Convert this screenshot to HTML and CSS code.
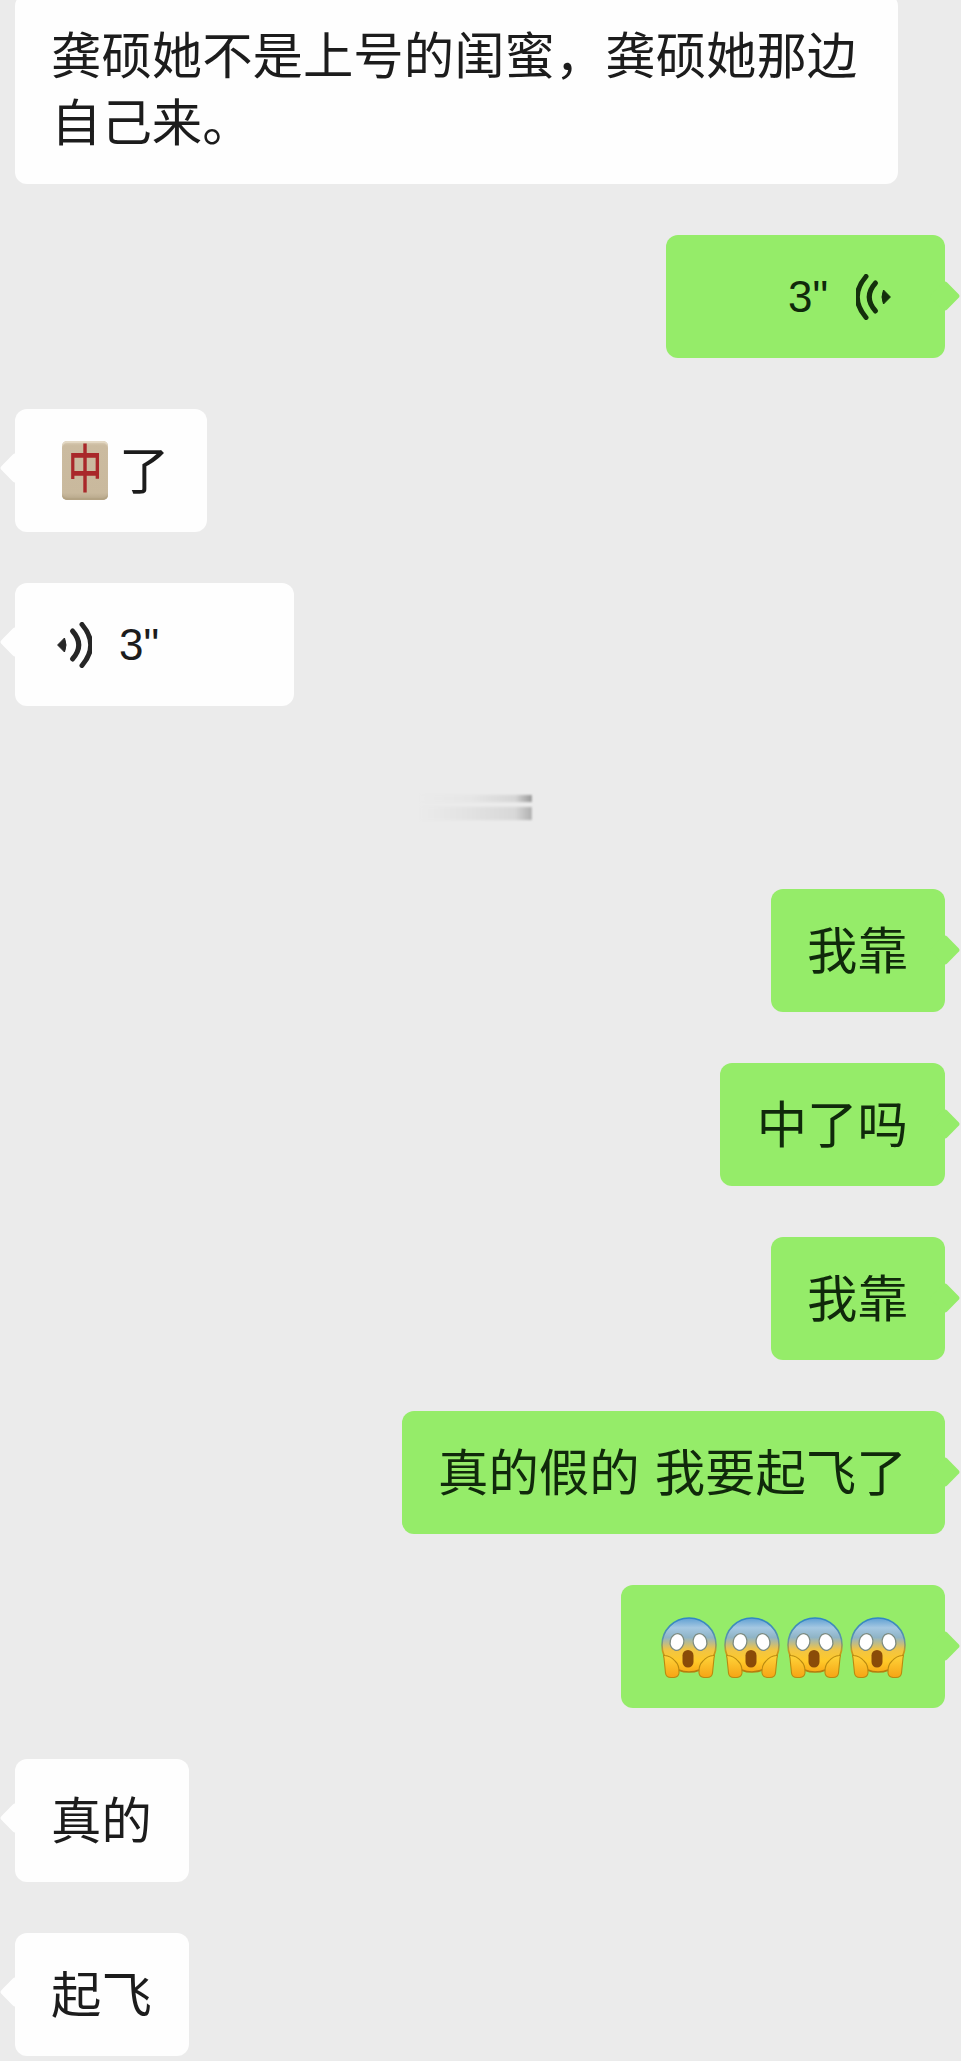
FILE: index.html
```html
<!DOCTYPE html>
<html lang="zh-CN">
<head>
<meta charset="utf-8">
<title>Chat</title>
<link rel="stylesheet" href="styles.css">
</head>
<body>
<svg class="defs" width="0" height="0" aria-hidden="true">
  <defs>
    <symbol id="wave" viewBox="0 0 35 46">
      <path d="M0.6 23 L7.5 16 Q10.5 23 7.5 30 Z" fill="currentColor" stroke="currentColor" stroke-width="1" stroke-linejoin="round"/>
      <path d="M15.5 9 Q28 23 15.5 37" fill="none" stroke="currentColor" stroke-width="5" stroke-linecap="round"/>
      <path d="M25 2.5 Q42.5 23 25 43.5" fill="none" stroke="currentColor" stroke-width="5" stroke-linecap="round"/>
    </symbol>
    <linearGradient id="headFill" x1="0" y1="0" x2="0" y2="1">
      <stop offset="0" stop-color="#5f9fd2"/>
      <stop offset="0.18" stop-color="#a5c8e2"/>
      <stop offset="0.36" stop-color="#8fb4c6"/>
      <stop offset="0.58" stop-color="#f0c446"/>
      <stop offset="0.8" stop-color="#ffc928"/>
      <stop offset="1" stop-color="#f9a917"/>
    </linearGradient>
    <linearGradient id="headEdge" x1="0" y1="0" x2="0" y2="1">
      <stop offset="0" stop-color="#2f86c6"/>
      <stop offset="0.4" stop-color="#5d93a8"/>
      <stop offset="0.62" stop-color="#c99a1c"/>
      <stop offset="1" stop-color="#b67c0c"/>
    </linearGradient>
    <linearGradient id="handFill" x1="0" y1="0" x2="0" y2="1">
      <stop offset="0" stop-color="#ffd53a"/>
      <stop offset="1" stop-color="#f6a414"/>
    </linearGradient>
    <symbol id="scream" viewBox="0 0 56 62">
      <circle cx="28" cy="28" r="27" fill="url(#headFill)" stroke="url(#headEdge)" stroke-width="1.6"/>
      <ellipse cx="16" cy="25" rx="6.8" ry="8.4" transform="rotate(14 16 25)" fill="#fff" stroke="#7c8a80" stroke-width="1.3"/>
      <ellipse cx="39" cy="25" rx="6.8" ry="8.4" transform="rotate(-14 39 25)" fill="#fff" stroke="#7c8a80" stroke-width="1.3"/>
      <rect x="21.5" y="33" width="11" height="17.5" rx="5.5" fill="#8a4b08"/>
      <path d="M3.5 38.5 Q2 37 3 41 L4.5 56 Q5 60.5 10 60.5 L13 60.5 Q17.5 60 18 56 Q18.5 48 14 44 Q10 39 3.5 38.5 Z" fill="url(#handFill)" stroke="#b98a10" stroke-width="1.1"/>
      <path d="M52.5 38.5 Q54 37 53 41 L51.5 56 Q51 60.5 46 60.5 L43 60.5 Q38.5 60 38 56 Q37.5 48 42 44 Q46 39 52.5 38.5 Z" fill="url(#handFill)" stroke="#b98a10" stroke-width="1.1"/>
    </symbol>
  </defs>
</svg>

<main class="chat">
  <div class="row row-in">
    <div class="bubble in no-tail">龚硕她不是上号的闺蜜&#65292;龚硕她那边<br>自己来。</div>
  </div>

  <div class="row row-out">
    <div class="bubble out voice-out">
      <span class="secs">3"</span>
      <svg class="wave flip"><use href="#wave"/></svg>
    </div>
  </div>

  <div class="row row-in">
    <div class="bubble in tile-msg">
      <span class="tile"><span class="tile-glyph">中</span></span>
      <span>了</span>
    </div>
  </div>

  <div class="row row-in">
    <div class="bubble in voice-in">
      <svg class="wave"><use href="#wave"/></svg>
      <span class="secs">3"</span>
    </div>
  </div>

  <div class="blurred" aria-hidden="true">
    <div class="smear smear-thin"></div>
    <div class="smear smear-thick"></div>
  </div>

  <div class="row row-out"><div class="bubble out">我靠</div></div>
  <div class="row row-out"><div class="bubble out wide">中了吗</div></div>
  <div class="row row-out"><div class="bubble out">我靠</div></div>
  <div class="row row-out"><div class="bubble out long">真的假的 我要起飞了</div></div>

  <div class="row row-out">
    <div class="bubble out emoji-msg">
      <svg class="scream"><use href="#scream"/></svg>
      <svg class="scream"><use href="#scream"/></svg>
      <svg class="scream"><use href="#scream"/></svg>
      <svg class="scream"><use href="#scream"/></svg>
    </div>
  </div>

  <div class="row row-in"><div class="bubble in">真的</div></div>
  <div class="row row-in"><div class="bubble in">起飞</div></div>
</main>
</body>
</html>
```

FILE: styles.css
```css
html, body {
  margin: 0;
  padding: 0;
}

body {
  background: #ebebeb;
  height: 2061px;
  overflow: hidden;
  font-family: "Liberation Sans", "Noto Sans CJK SC", sans-serif;
}

.defs {
  position: absolute;
}

.chat {
  display: flex;
  flex-direction: column;
  gap: 51px;
  margin-top: -6px;
}

.row {
  display: flex;
}

.row-in {
  justify-content: flex-start;
  padding-left: 15px;
}

.row-out {
  justify-content: flex-end;
  padding-right: 16px;
}

.bubble {
  position: relative;
  box-sizing: border-box;
  min-height: 123px;
  padding: 29px 37.2px 27px 36px;
  border-radius: 12px;
  font-size: 50.4px;
  line-height: 67px;
  word-spacing: 1px;
  white-space: nowrap;
}

.bubble::before {
  content: "";
  position: absolute;
  width: 22px;
  height: 22px;
  border-radius: 3px;
  transform: rotate(45deg);
}

.no-tail::before {
  display: none;
}

.no-tail {
  width: 883px;
}

.wide {
  padding-left: 36.6px;
}

.long {
  padding-right: 38.4px;
}

.in {
  background: #fefefe;
  color: #1c1c1c;
}

.in::before {
  background: #fefefe;
  left: -11px;
  top: 48px;
}

.out {
  background: #95ec69;
  color: #10290b;
}

.out::before {
  background: #95ec69;
  right: -11px;
  top: 50px;
}

.voice-in,
.voice-out,
.tile-msg,
.emoji-msg {
  display: flex;
  align-items: center;
  padding-top: 0;
  padding-bottom: 0;
}

.voice-in {
  width: 279px;
  padding-left: 42px;
  gap: 27px;
}

.voice-out {
  width: 279px;
  justify-content: flex-end;
  padding-right: 54px;
  gap: 28px;
}

.secs {
  font-size: 44px;
  line-height: 1;
}

.wave {
  display: block;
  width: 35px;
  height: 46px;
  flex: none;
}

.flip {
  transform: scaleX(-1);
}

.voice-in .wave {
  color: #262626;
}

.voice-out .wave {
  color: #14300c;
}

.tile-msg {
  padding-left: 47px;
  gap: 11px;
}

.tile-msg > span:last-child {
  position: relative;
  top: 1px;
}

.tile {
  display: flex;
  align-items: center;
  justify-content: center;
  box-sizing: border-box;
  width: 46px;
  height: 59px;
  border-radius: 5px;
  background: linear-gradient(#d9ccb4 0, #cbbba0 8%, #c9b99d 88%, #b5a588 100%);
  box-shadow: inset 0 2px 1px #e4d9c5, inset 0 -2px 1px #b3a283;
  overflow: hidden;
}

.tile-glyph {
  color: #a9282a;
  font-size: 36px;
  line-height: 36px;
  font-weight: 500;
  transform: scale(0.95, 1.45);
}

.emoji-msg {
  padding-left: 40px;
  padding-right: 39px;
  gap: 7px;
}

.scream {
  display: block;
  width: 56px;
  height: 62px;
  flex: none;
  position: relative;
  top: 1px;
}

.blurred {
  display: flex;
  flex-direction: column;
  gap: 5px;
  width: 113px;
  margin: 38px 0 18px 420px;
  filter: blur(1px);
}

.smear {
  border-right: 1px solid #f6f6f6;
}

.smear-thin {
  height: 7px;
  background: linear-gradient(90deg, #ebebeb 0, #e6e6e6 45%, #d6d6d6 85%, #999 100%);
}

.smear-thick {
  height: 13px;
  background: linear-gradient(90deg, #ebebeb 0, #e3e3e3 40%, #d8d8d8 85%, #b0b0b0 100%);
}
```
